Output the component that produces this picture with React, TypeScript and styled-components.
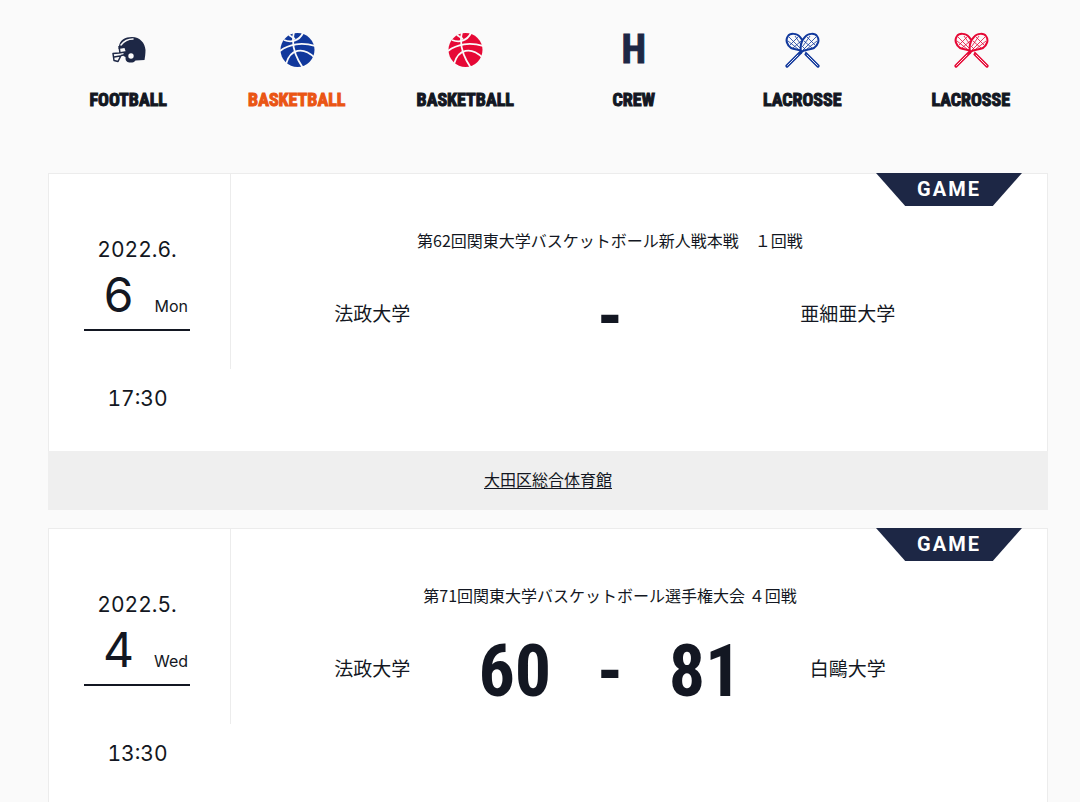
import React from 'react';
import styled, { createGlobalStyle } from 'styled-components';

const INK = '#131722';
const NAVY = '#1d2745';
const BLUE = '#11389c';
const RED = '#e60835';
const LINE = '#ececec';
const CONDENSED = "'Roboto Condensed', 'Open Sans Condensed', 'Noto Sans Condensed', Roboto, sans-serif";

const GlobalStyle = createGlobalStyle`
  *, *::before, *::after { box-sizing: border-box; }
  html { scrollbar-width: none; }
  body {
    margin: 0;
    background: #fafafa;
    color: ${INK};
    font-family: 'Noto Sans CJK JP', 'Liberation Sans', sans-serif;
    font-size: 16px;
  }
`;

const SportNav = styled.nav`
  padding: 32px 25px 0 44px;
`;

const SportList = styled.ul`
  display: grid;
  grid-template-columns: repeat(6, 1fr);
  margin: 0;
  padding: 0;
  list-style: none;
`;

const SportLink = styled.a<{ $active?: boolean }>`
  display: flex;
  flex-direction: column;
  align-items: center;
  gap: 20px;
  color: ${p => (p.$active ? '#ea5514' : INK)};
  font: bold 18px/24px ${CONDENSED};
  -webkit-text-stroke: 1px currentColor;
  text-decoration: none;
`;

const IconBox = styled.span`
  display: flex;
  align-items: center;
  justify-content: center;
  height: 36px;

  svg { display: block; }
`;

const Initial = styled.span`
  color: ${NAVY};
  font-size: 40px;
  line-height: 36px;
`;

const Games = styled.main`
  display: flex;
  flex-direction: column;
  gap: 18px;
  padding: 61px 32px 0 48px;
`;

const Card = styled.article`
  position: relative;
`;

const CardBody = styled.div`
  display: grid;
  grid-template-columns: 182px 1fr;
  grid-template-rows: 195px auto;
  border: 1px solid ${LINE};
  border-bottom: 0;
  background: #fff;
`;

const Ribbon = styled.span`
  position: absolute;
  top: 0;
  right: 26px;
  width: 146px;
  height: 33px;
  background: ${NAVY};
  clip-path: polygon(0 0, 100% 0, 80% 100%, 20% 100%);
  color: #fff;
  font: bold 20px/32px Roboto, sans-serif;
  letter-spacing: 2px;
  text-align: center;
`;

const DateBox = styled.div`
  padding: 61px 40px 0 35px;
  border-right: 1px solid ${LINE};
  font-family: Inter, 'Liberation Sans', sans-serif;
  font-variant-numeric: tabular-nums;
`;

const Month = styled.div`
  font-size: 21px;
  line-height: 30px;
  text-align: center;
`;

const DayRow = styled.div`
  display: flex;
  align-items: baseline;
  justify-content: space-between;
  height: 66px;
  padding: 0 2px 0 19px;
  border-bottom: 2px solid ${INK};
`;

const Day = styled.span`
  font-size: 48px;
  line-height: 60px;
`;

const Weekday = styled.span`
  font-size: 16px;
`;

const Time = styled.div`
  padding: 15px 40px 37px 35px;
  font: 21px/30px Inter, 'Liberation Sans', sans-serif;
  font-variant-numeric: tabular-nums;
  text-align: center;
`;

const Match = styled.div`
  padding: 54px 58px 0 0;
`;

const Title = styled.h2`
  margin: 0;
  font-size: 16px;
  font-weight: 400;
  line-height: 24px;
  text-align: center;
`;

const Versus = styled.div`
  display: grid;
  grid-template-columns: 2fr 1fr 1fr 1fr 2fr;
  align-items: center;
  margin-top: 21px;
  padding: 0 46px;
  text-align: center;
`;

const Team = styled.span`
  font-size: 19px;
  line-height: 28px;
`;

const Score = styled.span`
  height: 80px;
  padding-top: 4px;
  font: bold 72px/80px ${CONDENSED};
`;

const Venue = styled.div`
  padding: 15px 16px 17px;
  background: #efefef;
  line-height: 27px;
  text-align: center;

  a {
    color: ${INK};
    text-underline-offset: 2px;
  }
`;

const Helmet = () => (
  <svg width="36" height="36" viewBox="0 0 36 36" aria-hidden="true">
    <path
      fill={NAVY}
      d="M9 14C10 8 15 5 22 5c8 0 13 6 13.500 13 0 4-.5 7-1 10l-9 .5c-2 2.500-5 2.500-8 1.500-2-1-2-3-2-5l-2-1v-3l2-2-1-3-6 1z"
    />
    <path fill="none" stroke="#fafafa" strokeWidth="1.500" strokeLinecap="round" d="M11 13c3-4 7-6 12-6" />
    <circle cx="21" cy="24" r="2.700" fill="#fafafa" />
    <path
      fill="none"
      stroke={NAVY}
      strokeWidth="1.500"
      strokeLinejoin="round"
      d="M15 20l-6 1-6 .5 1 7 4 1 3-6 5-1M4 25l6-1M9 14l1 7"
    />
  </svg>
);

const Ball = ({ color }: { color: string }) => (
  <svg width="36" height="36" viewBox="0 0 36 36" aria-hidden="true">
    <circle cx="18.500" cy="18" r="17" fill={color} />
    <g fill="none" stroke="#fafafa" strokeWidth="1.800">
      <path d="M15 0c-3 12 0 23 9 36" />
      <path d="M5 8c7 3 15 1 19-7M10 3l6 4" />
      <path d="M1 19c9-7 22-9 35-5" />
      <path d="M7 32c4-15 17-18 29-6" />
    </g>
  </svg>
);

const Stick = ({ color }: { color: string }) => (
  <>
    <path
      d="M17 20C16 14 17 9 21 5c3-4 10-4 12-1 3 4 1 9-3 12-4 2-9 1-13 4z"
      fill="#fafafa"
      stroke={color}
      strokeWidth="2"
      strokeLinejoin="round"
    />
    <path
      d="M19 18L32 5M19 14l7-10M23 17l10-8M20 9l8 7M23 5l8 8M18 14l3 3"
      fill="none"
      stroke={color}
      strokeWidth="0.8"
    />
    <path d="M17 20L3 34" stroke={color} strokeWidth="3.200" strokeLinecap="round" />
    <path d="M14 23L3.500 33.500" stroke="#fafafa" strokeWidth="0.9" strokeLinecap="round" />
  </>
);

const Sticks = ({ color }: { color: string }) => (
  <svg width="36" height="36" viewBox="0 0 36 36" aria-hidden="true">
    <g transform="translate(37 0) scale(-1 1)">
      <Stick color={color} />
    </g>
    <path d="M20 17L17 24" stroke="#fafafa" strokeWidth="5" />
    <Stick color={color} />
  </svg>
);

const sports = [
  { name: 'FOOTBALL', icon: <Helmet /> },
  { name: 'BASKETBALL', icon: <Ball color={BLUE} />, active: true },
  { name: 'BASKETBALL', icon: <Ball color={RED} /> },
  { name: 'CREW', icon: <Initial aria-hidden="true">H</Initial> },
  { name: 'LACROSSE', icon: <Sticks color={BLUE} /> },
  { name: 'LACROSSE', icon: <Sticks color={RED} /> },
];

interface Game {
  month: string;
  day: string;
  weekday: string;
  time: string;
  title: string;
  home: string;
  away: string;
  score: [string, string];
  venue?: string;
}

const games: Game[] = [
  {
    month: '2022.6.',
    day: '6',
    weekday: 'Mon',
    time: '17:30',
    title: '第62回関東大学バスケットボール新人戦本戦　１回戦',
    home: '法政大学',
    away: '亜細亜大学',
    score: ['', ''],
    venue: '大田区総合体育館',
  },
  {
    month: '2022.5.',
    day: '4',
    weekday: 'Wed',
    time: '13:30',
    title: '第71回関東大学バスケットボール選手権大会 ４回戦',
    home: '法政大学',
    away: '白鷗大学',
    score: ['60', '81'],
  },
];

const GameCard = ({ game }: { game: Game }) => (
  <Card>
    <CardBody>
      <DateBox>
        <Month>{game.month}</Month>
        <DayRow>
          <Day>{game.day}</Day>
          <Weekday>{game.weekday}</Weekday>
        </DayRow>
      </DateBox>
      <Match>
        <Title>{game.title}</Title>
        <Versus>
          <Team>{game.home}</Team>
          <Score>{game.score[0]}</Score>
          <Score>-</Score>
          <Score>{game.score[1]}</Score>
          <Team>{game.away}</Team>
        </Versus>
      </Match>
      <Time>{game.time}</Time>
    </CardBody>
    <Ribbon>GAME</Ribbon>
    {game.venue && (
      <Venue>
        <a href="#venue">{game.venue}</a>
      </Venue>
    )}
  </Card>
);

export default function App() {
  return (
    <>
      <GlobalStyle />
      <SportNav aria-label="Sports">
        <SportList>
          {sports.map((sport, i) => (
            <li key={i}>
              <SportLink href="#games" $active={sport.active}>
                <IconBox>{sport.icon}</IconBox>
                {sport.name}
              </SportLink>
            </li>
          ))}
        </SportList>
      </SportNav>
      <Games id="games">
        {games.map(game => (
          <GameCard key={game.month} game={game} />
        ))}
      </Games>
    </>
  );
}
